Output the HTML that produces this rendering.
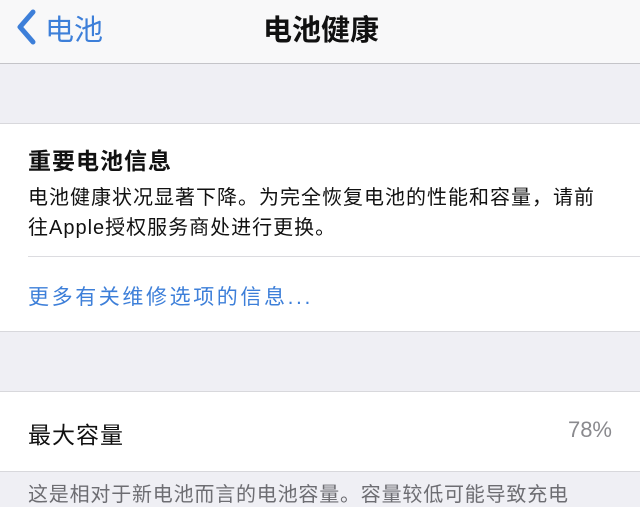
<!DOCTYPE html>
<html><head><meta charset="utf-8"><style>
body{margin:0;width:640px;height:500px;overflow:hidden;background:#efeff4;font-family:"Liberation Sans","Noto Sans CJK SC",sans-serif;position:relative}
.a{position:absolute;white-space:nowrap}
</style></head><body>
<div class="a" style="left:0;top:0;width:640px;height:63px;background:#f8f8f9;border-bottom:1px solid #c4c4c8"></div>
<svg class="a" style="left:14px;top:8px" width="24" height="38" viewBox="0 0 24 38"><path d="M19 4 L6 19 L19 34" fill="none" stroke="#3d7fd9" stroke-width="5" stroke-linecap="round" stroke-linejoin="round"/></svg>
<div class="a" style="left:45px;top:7px;font-size:29px;color:#3d7fd9">电池</div>
<div class="a" style="left:263px;top:7px;font-size:29px;font-weight:bold;color:#111">电池健康</div>
<div class="a" style="left:0;top:123px;width:640px;height:207px;background:#fff;border-top:1px solid #d8d8dc;border-bottom:1px solid #d8d8dc"></div>
<div class="a" style="left:28px;top:142px;font-size:23px;letter-spacing:1px;font-weight:bold;color:#111">重要电池信息</div>
<div class="a" style="left:28px;top:183px;font-size:20px;letter-spacing:1px;line-height:30px;color:#111">电池健康状况显著下降。为完全恢复电池的性能和容量，请前<br>往Apple授权服务商处进行更换。</div>
<div class="a" style="left:28px;top:256px;width:612px;height:1px;background:#dcdce0"></div>
<div class="a" style="left:28px;top:281px;font-size:21px;letter-spacing:2.6px;color:#3d7fd9">更多有关维修选项的信息...</div>
<div class="a" style="left:0;top:391px;width:640px;height:79px;background:#fff;border-top:1px solid #d8d8dc;border-bottom:1px solid #d8d8dc"></div>
<div class="a" style="left:28px;top:416px;font-size:23px;letter-spacing:1px;color:#111">最大容量</div>
<div class="a" style="right:28px;top:417px;font-size:22px;color:#8a8a8e">78%</div>
<div class="a" style="left:28px;top:478px;font-size:20px;letter-spacing:0.8px;color:#6d6d72">这是相对于新电池而言的电池容量。容量较低可能导致充电</div>
</body></html>
